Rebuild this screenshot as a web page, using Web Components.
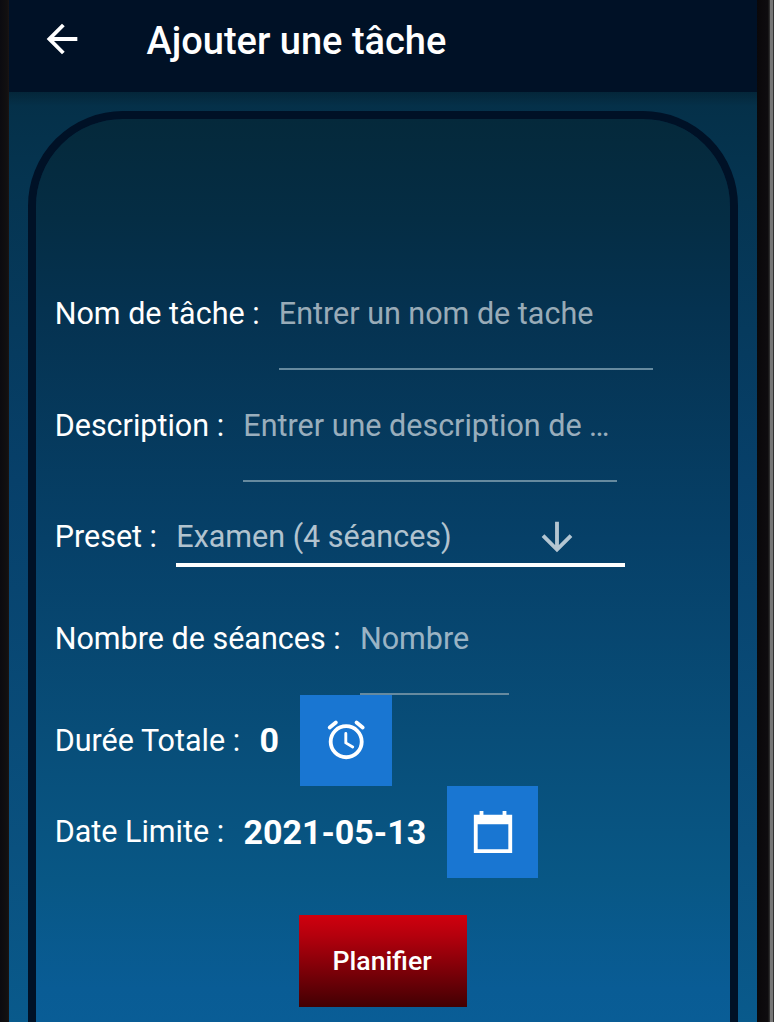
<!DOCTYPE html>
<html lang="fr"><head><meta charset="utf-8"><title>Ajouter une tâche</title>
<style>html,body{margin:0;height:100%;overflow:hidden}body{font-family:Roboto,sans-serif;color:#fff}</style></head>
<body>
<phone-frame>
  <app-bar slot="bar">Ajouter une tâche</app-bar>
  <task-card>
    <form-row style="--h:112px"><span slot="label">Nom de tâche :</span><text-line style="--w:374px">Entrer un nom de tache</text-line></form-row>
    <form-row style="--h:112px"><span slot="label">Description :</span><text-line style="--w:374px">Entrer une description de …</text-line></form-row>
    <form-row style="--h:101px;--drop:9px"><span slot="label">Preset :</span><preset-select>Examen (4 séances)</preset-select></form-row>
    <form-row style="--h:112px"><span slot="label">Nombre de séances :</span><text-line style="--w:149.5px">Nombre</text-line></form-row>
    <form-row style="--h:91.5px;--drop:1px"><span slot="label">Durée Totale :</span><value-text style="--gap:21.4px">0</value-text><icon-button icon="alarm"></icon-button></form-row>
    <form-row style="--h:91.5px"><span slot="label">Date Limite :</span><value-text>2021-05-13</value-text><icon-button icon="calendar"></icon-button></form-row>
    <plan-button>Planifier</plan-button>
  </task-card>
</phone-frame>
<script>
const define = (name, html, setup) => customElements.define(name, class extends HTMLElement {
  constructor() {
    super();
    this.attachShadow({mode: 'open'}).innerHTML = html;
  }
  connectedCallback() { if (setup) setup(this); }
});
define('phone-frame', `<style>
:host{display:grid;grid-template-columns:9px 748px 17px;height:1022px;overflow:hidden}
.l{background:linear-gradient(90deg,#0b0b10,#121010 80%,#1b1515)}
.r{background:linear-gradient(90deg,#0a080a 0,#0e0c0f 11px,#222 12px,#39393a 13px,#777 13px,#777 16px,#333 16px)}
.s{display:flex;flex-direction:column;min-width:0;height:1022px;overflow:hidden;background:linear-gradient(#052b3f 0,#053450 180px,#07406a 480px,#0a517f 850px,#095a8c 1022px)}
.body{flex:1;min-height:0;padding:19px 19px 0;background:linear-gradient(#0003,#0000 14px)}
</style><div class="l"></div><div class="s"><slot name="bar"></slot><div class="body"><slot></slot></div></div><div class="r"></div>`);
define('app-bar', `<style>
:host{display:flex;align-items:center;height:92px;flex:none;box-sizing:border-box;padding:0 0 14px 30px;background:#001126;font-size:38px;font-weight:500}
svg{width:46px;height:46px;margin-right:61.5px;flex:none}.t{display:block;line-height:46px;padding-top:4px;white-space:nowrap}
</style><svg viewBox="0 0 24 24" fill="#fff"><path d="M20 11H7.83l5.59-5.59L12 4l-8 8 8 8 1.41-1.41L7.83 13H20z"/></svg><span class="t"><slot></slot></span>`);
define('task-card', `<style>
:host{display:flex;flex-direction:column;box-sizing:border-box;width:710px;height:1060px;border:8px solid #001126;border-radius:95px;padding:138.5px 19px 0 18.7px;background:linear-gradient(#05293b 0,#052d44 100px,#053250 190px,#064068 420px,#084d78 610px,#085785 760px,#095c95 870px,#0a6099 1000px) padding-box}
</style><slot></slot>`);
define('form-row', `<style>
:host{display:flex;align-items:center;height:var(--h);flex:none;font-size:30.5px;line-height:36px;white-space:nowrap}
.label{margin-right:19.3px;padding-top:var(--drop,0)}
</style><span class="label"><slot name="label"></slot></span><slot></slot>`);
define('text-line', `<style>
:host{display:flex;align-items:center;align-self:stretch;box-sizing:border-box;width:var(--w);padding-top:2px;border-bottom:2px solid #668a9f;color:#ffffff99}
</style><slot></slot>`);
define('preset-select', `<style>
:host{display:flex;align-items:center;align-self:flex-start;box-sizing:border-box;width:449px;height:85px;padding-top:30px;border-bottom:4px solid #fff;color:#ffffffb3}
.v{flex:1}svg{width:46px;height:46px;margin-right:45px}
</style><span class="v"><slot></slot></span><svg viewBox="0 0 24 24" fill="currentColor"><path d="M20 12l-1.41-1.41L13 16.17V4h-2v12.17l-5.58-5.59L4 12l8 8 8-8z"/></svg>`);
define('value-text', `<style>:host{display:block;font-size:34px;font-weight:700;line-height:40px;margin-right:var(--gap,20.5px)}</style><slot></slot>`);
const icons = {
  alarm: '<g fill="none" stroke="#fff" stroke-linecap="round" stroke-linejoin="round"><circle cx="12.1" cy="12.9" r="8.1" stroke-width="2"/><path stroke-width="2" d="M3.5 5.5 6.7 2.9M20.7 5.5 17.5 2.9"/><path stroke-width="1.5" d="M11.9 8.6v4.9l3.6 2.2"/></g>',
  calendar: '<path fill="#fff" d="M22 3h-3V1h-2v2H7V1H5v2H2v20h20V3zm-2 18H4V8h16v13z"/>'
};
define('icon-button', `<style>
:host{display:flex;align-items:center;justify-content:center;width:91.5px;height:91.5px;background:#1976d2}svg{width:46px;height:46px}
</style><svg viewBox="0 0 24 24"></svg>`, el => el.shadowRoot.querySelector('svg').innerHTML = icons[el.getAttribute('icon')]);
define('plan-button', `<style>
:host{display:flex;align-items:center;justify-content:center;align-self:center;flex:none;box-sizing:border-box;width:168px;height:91.5px;padding:1px 1.5px 0 0;margin-top:37.5px;background:linear-gradient(#d0000e,#b5000d 22%,#420003);font-size:26.7px;font-weight:500}
</style><slot></slot>`);
</script></body></html>
